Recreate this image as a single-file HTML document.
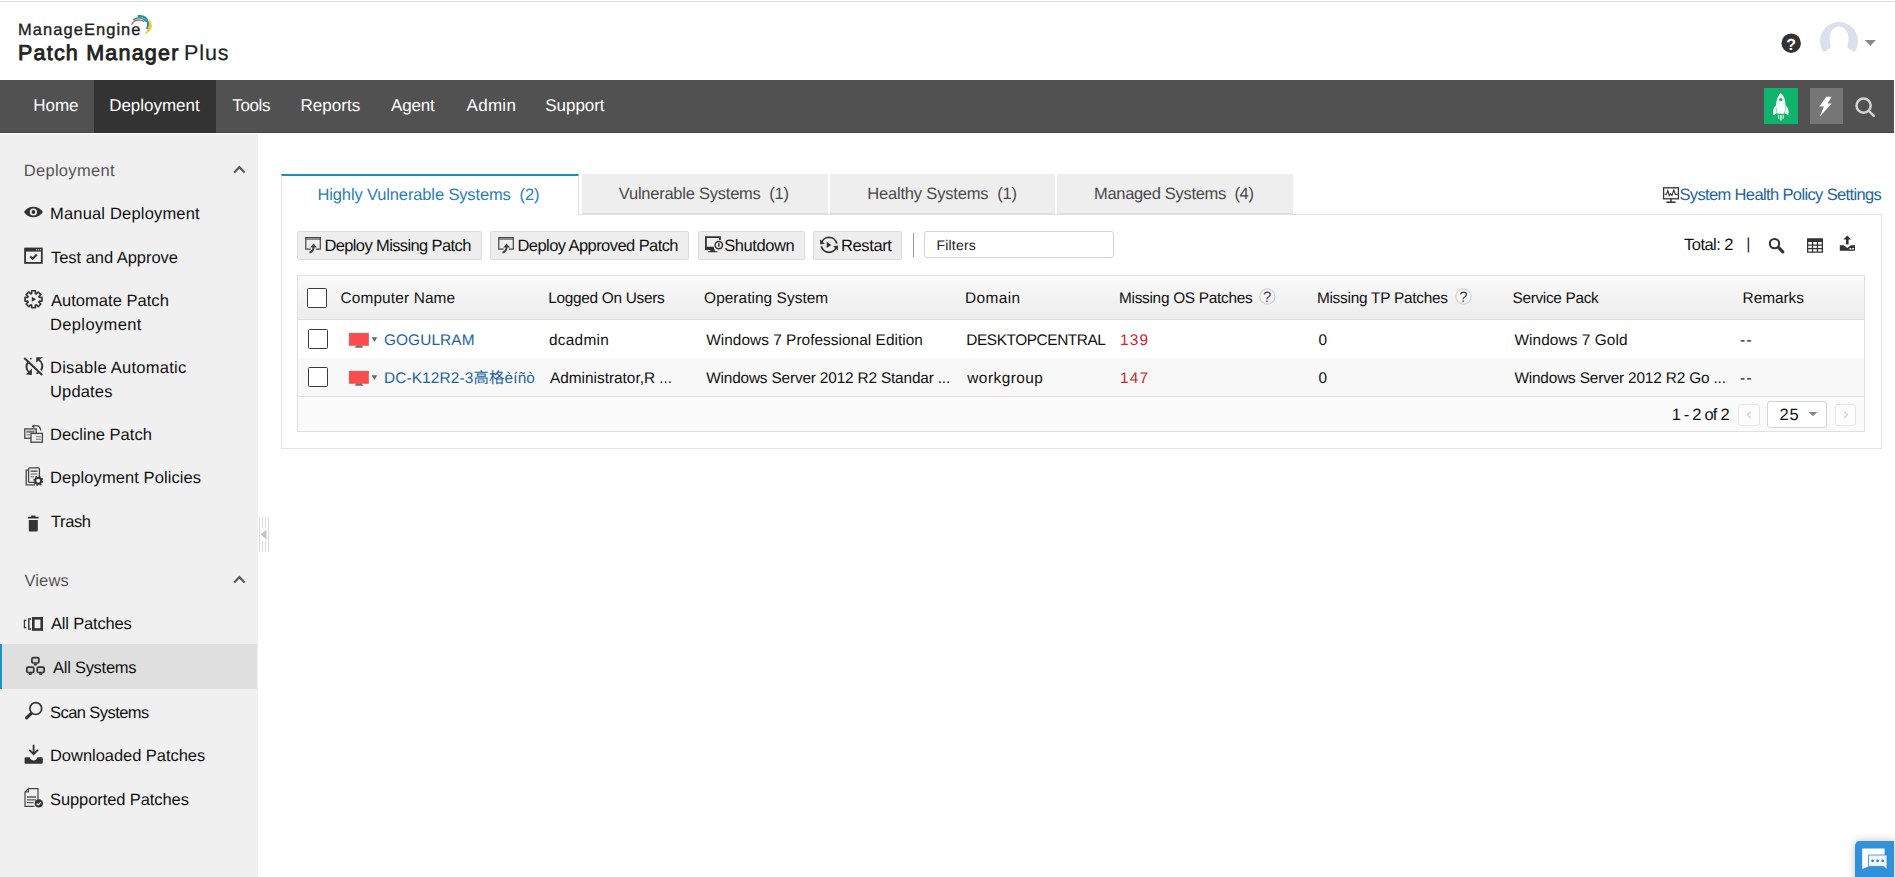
<!DOCTYPE html>
<html lang="en">
<head>
<meta charset="utf-8">
<title>Patch Manager Plus - All Systems</title>
<style>
html,body{margin:0;padding:0;background:#fff;text-rendering:geometricPrecision;}
body{width:1895px;height:877px;position:relative;overflow:hidden;font-family:"Liberation Sans","Noto Sans CJK SC",sans-serif;}
.a{position:absolute;box-sizing:border-box;}
.t{position:absolute;white-space:pre;line-height:1;font-family:"Liberation Sans","Noto Sans CJK SC",sans-serif;}
svg{position:absolute;overflow:visible;}
</style>
</head>
<body>
<!-- top hairline -->
<div class="a" style="left:0;top:1px;width:1895px;height:1px;background:#dcdcdc"></div>
<!-- nav bar -->
<div class="a" style="left:0;top:80px;width:1894px;height:53px;background:linear-gradient(#515151 0,#515151 52px,#474747 52px)"></div>
<div class="a" style="left:94px;top:80px;width:122px;height:53px;background:#333"></div>
<!-- sidebar -->
<div class="a" style="left:0;top:134px;width:258px;height:743px;background:#f0f0f0"></div>
<div class="a" style="left:0;top:644px;width:257px;height:45px;background:#dfdfdf"></div>
<div class="a" style="left:0;top:644px;width:2px;height:45px;background:#1b93c8"></div>
<!-- tabs -->
<div class="a" style="left:281px;top:214px;width:1601px;height:235px;border:1px solid #e2e2e2;background:#fff"></div>
<div class="a" style="left:281px;top:174px;width:298px;height:41px;background:#fff;border-left:1px solid #e2e2e2;border-right:1px solid #e2e2e2;border-top:2px solid #1d8cc0"></div>
<div class="a" style="left:582px;top:174px;width:246px;height:40px;background:#eee;border-bottom:1px solid #ddd"></div>
<div class="a" style="left:830px;top:174px;width:225px;height:40px;background:#eee;border-bottom:1px solid #ddd"></div>
<div class="a" style="left:1057px;top:174px;width:236px;height:40px;background:#eee;border-bottom:1px solid #ddd"></div>
<!-- toolbar buttons -->
<div class="a" style="left:297px;top:231px;width:185px;height:29px;background:#eee;border:1px solid #dcdcdc;border-radius:2px"></div>
<div class="a" style="left:490px;top:231px;width:199px;height:29px;background:#eee;border:1px solid #dcdcdc;border-radius:2px"></div>
<div class="a" style="left:698px;top:231px;width:107px;height:29px;background:#eee;border:1px solid #dcdcdc;border-radius:2px"></div>
<div class="a" style="left:813px;top:231px;width:89px;height:29px;background:#eee;border:1px solid #dcdcdc;border-radius:2px"></div>
<div class="a" style="left:913px;top:233px;width:1px;height:24px;background:#999"></div>
<div class="a" style="left:924px;top:231px;width:190px;height:27px;background:#fff;border:1px solid #d2d2d2;border-radius:3px"></div>
<!-- table -->
<div class="a" style="left:297px;top:275px;width:1568px;height:157px;border:1px solid #e0e0e0;background:#fbfbfb"></div>
<div class="a" style="left:298px;top:276px;width:1566px;height:43px;background:linear-gradient(#fafafa,#ededed)"></div>
<div class="a" style="left:298px;top:319px;width:1566px;height:1px;background:#ddd"></div>
<div class="a" style="left:298px;top:320px;width:1566px;height:38px;background:#fff"></div>
<div class="a" style="left:298px;top:358px;width:1566px;height:38px;background:#f8f8f8"></div>
<div class="a" style="left:298px;top:396px;width:1566px;height:1px;background:#e0e0e0"></div>
<!-- checkboxes -->
<div class="a" style="left:307px;top:288px;width:20px;height:20px;background:#fff;border:1px solid #3a3a3a;border-radius:1.5px"></div>
<div class="a" style="left:308px;top:329px;width:20px;height:20px;background:#fff;border:1px solid #3a3a3a;border-radius:1.5px"></div>
<div class="a" style="left:308px;top:367px;width:20px;height:20px;background:#fff;border:1px solid #3a3a3a;border-radius:1.5px"></div>
<!-- pager -->
<div class="a" style="left:1738px;top:404px;width:22px;height:22px;background:#fdfdfd;border:1px solid #e6e6e6;border-radius:3px"></div>
<div class="a" style="left:1767px;top:401px;width:60px;height:27px;background:#fff;border:1px solid #d4d4d4;border-radius:3px"></div>
<div class="a" style="left:1835px;top:404px;width:21px;height:22px;background:#fdfdfd;border:1px solid #e6e6e6;border-radius:3px"></div>
<!-- top-right nav buttons -->
<div class="a" style="left:1764px;top:88px;width:34px;height:36px;background:#10b36b"></div>
<div class="a" style="left:1810px;top:88px;width:33px;height:36px;background:#767676"></div>
<!-- chat -->
<div class="a" style="left:1855px;top:841px;width:39px;height:40px;background:#3090d9;border-radius:5px 0 0 0;box-shadow:0 0 8px rgba(0,0,0,.25)"></div>
<svg width="1895" height="877" viewBox="0 0 1895 877" style="left:0;top:0">
<!-- logo swoosh -->
<g fill="none" stroke-linecap="round">
<path d="M131.8 24.3 Q134.2 19.6 139.5 19.9 Q142.5 20.1 144 21.6" stroke="#d42f45" stroke-width="1.050"/>
<path d="M133.6 19.6 Q140 15.2 146.2 21.2" stroke="#1ea672" stroke-width="1.650"/>
<path d="M138.5 16 Q146.8 15.4 148 23 Q148.4 26 147.2 28.3" stroke="#2a86c4" stroke-width="2.100"/>
</g>
<path d="M149.4 18.8 Q154.2 26.5 149.6 31.2 Q147.2 33.6 144 34.6 Q149.6 29.5 149.4 18.8Z" fill="#f1c83c"/>
<!-- help -->
<circle cx="1791.2" cy="43.2" r="9.7" fill="#333"/>
<!-- avatar -->
<clipPath id="av"><rect x="1818" y="20" width="42" height="33.5"/></clipPath>
<g clip-path="url(#av)">
<circle cx="1839" cy="41" r="19" fill="#dcdfec"/>
<ellipse cx="1839" cy="38.600" rx="9.600" ry="12.200" fill="#fff"/>
<rect x="1830.600" y="42" width="16.800" height="14" fill="#fff"/>
<path d="M1818 55.800 L1831 47.600 L1847 47.600 L1860 55.800 L1860 62 L1818 62Z" fill="#fff"/>
</g>
<path d="M1864.7 40 L1876 40 L1870.35 45.8Z" fill="#888"/>
<!-- rocket -->
<g fill="#f1fff8">
<path d="M1780.8 92.8 C1777 96.5 1775.6 102 1776.2 108 L1777.4 113.8 L1784.2 113.8 L1785.4 108 C1786 102 1784.6 96.5 1780.8 92.8Z"/>
<path d="M1775.6 105.5 C1773.4 107.5 1772.6 111 1773.2 115.2 L1776.8 113.2Z"/>
<path d="M1786 105.5 C1788.2 107.5 1789 111 1788.4 115.2 L1784.8 113.2Z"/>
<rect x="1778" y="114.8" width="1.2" height="4" opacity=".8"/><rect x="1780.1" y="114.8" width="1.6" height="5.6" opacity=".85"/><rect x="1782.6" y="114.8" width="1.2" height="4" opacity=".8"/>
</g>
<circle cx="1780.8" cy="99.6" r="1.6" fill="#10b36b"/>
<!-- bolt -->
<path d="M1826.2 96.8 L1831.6 96.8 L1827.6 103.6 L1831.8 103.6 L1819.6 116.8 L1824 106.6 L1819.4 106.6Z" fill="#fff"/>
<!-- nav search -->
<g fill="none" stroke="#d2d2d2" stroke-width="2.500"><circle cx="1863.600" cy="105.600" r="7.100"/><path d="M1868.800 110.800 L1873.800 115.800" stroke-linecap="round"/></g>
<!-- sidebar chevrons -->
<g fill="none" stroke="#5a5a5a" stroke-width="2.2"><path d="M234.2 172.6 L239.4 167.2 L244.6 172.6"/><path d="M234.2 582.6 L239.4 577.2 L244.6 582.6"/></g>
<!-- eye -->
<path d="M24 212 C28 205 38.600 205 42.9 212 C38.600 219 28 219 24 212Z" fill="#333"/>
<circle cx="33.400" cy="212" r="3.6" fill="#f3f3f3"/><circle cx="33.400" cy="212" r="1.9" fill="#333"/>
<!-- test & approve -->
<g fill="none" stroke="#333" stroke-width="1.8"><rect x="25.1" y="248.5" width="16.7" height="14.4"/></g>
<rect x="25" y="248" width="17" height="3.6" fill="#333"/>
<path d="M36 249.800 h1.200 M38 249.800 h1.200 M40 249.800 h1.200" stroke="#ddd" stroke-width="1"/>
<path d="M30.2 256.6 L32.6 258.8 L36.8 254.6" fill="none" stroke="#333" stroke-width="2.1"/>
<!-- gear play -->
<g transform="translate(33.5 299.3)">
<g fill="none" stroke="#333" stroke-width="1.6" stroke-linejoin="round"><path d="M1.83 5.82 L1.88 8.49 L-1.88 8.49 L-1.83 5.82 L-2.82 5.41 L-4.67 7.34 L-7.34 4.67 L-5.41 2.82 L-5.82 1.83 L-8.49 1.88 L-8.49 -1.88 L-5.82 -1.83 L-5.41 -2.82 L-7.34 -4.67 L-4.67 -7.34 L-2.82 -5.41 L-1.83 -5.82 L-1.88 -8.49 L1.88 -8.49 L1.83 -5.82 L2.82 -5.41 L4.67 -7.34 L7.34 -4.67 L5.41 -2.82 L5.82 -1.83 L8.49 -1.88 L8.49 1.88 L5.82 1.83 L5.41 2.82 L7.34 4.67 L4.67 7.34 L2.82 5.41Z"/></g>
<path d="M-1.7 -2.500 L2.600 0 L-1.7 2.500Z" fill="#333"/></g>
<!-- sync disabled -->
<g fill="none" stroke="#333" stroke-width="1.900">
<path d="M28.800 361.400 C25.500 364.500 25.600 369.600 29.400 372.800"/><path d="M38.800 360 C42.700 362 43.300 367 41 370.300"/><path d="M24.300 358 L42.200 375" stroke-width="2"/><path d="M36.400 373.400 C37.600 373.200 38.400 372.800 39 372.200" stroke-width="1.600"/>
</g>
<path d="M31.900 368.400 L31.900 375 L25.900 374.400Z" fill="#333"/><path d="M36.200 357.200 L42.800 357.200 L36.200 362.400Z" fill="#333"/><rect x="30.100" y="357.900" width="1.500" height="1.500" fill="#333"/>
<!-- decline patch -->
<g fill="none" stroke="#444" stroke-width="1.3"><rect x="24.800" y="428.900" width="11.400" height="9.400"/><rect x="31" y="433.400" width="11.400" height="8.800" fill="#f0f0f0"/><path d="M33.500 426 C38 424.500 40.500 427 40.800 430.500"/></g>
<rect x="26.400" y="430.600" width="8.200" height="2.200" fill="#777"/><rect x="26.400" y="434" width="4" height="1.600" fill="#999"/><rect x="36" y="436" width="5" height="1.400" fill="#999"/><rect x="36" y="438.600" width="5" height="1.400" fill="#999"/>
<path d="M31.500 426.300 L34.300 424.200 L34.300 428.200Z" fill="#444"/>
<!-- deployment policies -->
<g fill="none" stroke="#444" stroke-width="1.300"><path d="M28.300 470.200 L26.200 470.200 L26.200 484.800 L35 484.800"/><rect x="28.600" y="467.800" width="10.800" height="14.600" rx="1"/></g>
<rect x="30.600" y="470.400" width="6.800" height="1.500" fill="#555"/><rect x="30.600" y="473.400" width="6.800" height="1.200" fill="#777"/><rect x="30.600" y="476.200" width="3.600" height="1.200" fill="#777"/>
<circle cx="38.200" cy="480.800" r="4.600" fill="#f0f0f0"/><circle cx="38.200" cy="480.800" r="3" fill="none" stroke="#333" stroke-width="2"/><circle cx="38.200" cy="480.800" r="4.300" fill="none" stroke="#333" stroke-width="1.500" stroke-dasharray="1.700 1.680"/>
<!-- trash -->
<path d="M28 516.800 L38.600 516.800 L38.600 518.600 L28 518.600Z M31.200 515.600 L35.400 515.600 L35.400 517 L31.200 517Z M28.800 520 L37.800 520 L37.800 530.200 Q37.800 531.400 36.600 531.400 L30 531.400 Q28.800 531.400 28.800 530.200Z" fill="#333"/>
<!-- all patches -->
<g fill="none" stroke="#333"><rect x="33.300" y="618.300" width="8.400" height="11.200" stroke-width="2.600"/><path d="M31.200 619 L28.800 619 L28.800 629 L31.200 629" stroke-width="1.400"/><path d="M26.400 620.300 L24.400 620.300 L24.400 627.700 L26.400 627.700" stroke-width="1.200"/></g>
<!-- all systems -->
<g fill="none" stroke="#333" stroke-width="1.700"><rect x="31.900" y="657.700" width="7" height="5.300" rx="1.300" fill="#d0d0d0"/><rect x="26.800" y="667.200" width="7" height="5.300" rx="1.300" fill="#d0d0d0"/><rect x="37.200" y="667.200" width="7" height="5.300" rx="1.300" fill="#d0d0d0"/></g>
<path d="M33.600 663.800 H37.200 L36.600 665.500 H34.200Z M28.500 673.300 H32.100 L31.500 675 H29.100Z M38.900 673.300 H42.500 L41.900 675 H39.500Z" fill="#333"/>
<!-- scan systems -->
<g fill="none" stroke="#333"><circle cx="35.800" cy="708.600" r="5.900" stroke-width="1.700"/><path d="M31 713.600 L26.600 717.800" stroke-width="3.200" stroke-linecap="round"/></g>
<!-- downloaded patches -->
<path d="M32.700 744.800 L34.500 744.800 L34.500 752 L37.300 749.200 L38.500 750.400 L33.600 755.400 L28.700 750.400 L29.900 749.200 L32.700 752Z" fill="#333"/>
<path d="M24.600 758.400 Q24.600 757.200 25.800 757.200 L29.600 757.200 Q31 760.400 33.600 760.400 Q36.200 760.400 37.600 757.200 L41.600 757.200 Q42.800 757.200 42.800 758.400 L42.800 762.600 Q42.800 763.800 41.600 763.800 L25.800 763.800 Q24.600 763.800 24.600 762.600Z" fill="#333"/>
<!-- supported patches -->
<path d="M28.400 788.600 L38 788.600 L38 800 M34.500 806.400 L25 806.400 L25 792 L28.400 788.600 L28.400 792 L25 792" fill="none" stroke="#444" stroke-width="1.200"/>
<path d="M27 797 L36 797 M27 799.800 L36 799.800 M27 802.600 L33.500 802.600" stroke="#555" stroke-width="1.300"/>
<circle cx="38.800" cy="803.400" r="4.200" fill="#333"/><path d="M36.700 803.500 L38.200 805 L41 802.200" fill="none" stroke="#f0f0f0" stroke-width="1.200"/>
<!-- splitter -->
<g stroke="#cfcfcf" stroke-width="1"><path d="M259.500 517 V552 M262.500 517 V528 M262.500 541 V552 M265.500 517 V528 M265.500 541 V552 M268.500 517 V552" stroke="#d8d8d8"/></g>
<path d="M266.500 529.500 L266.500 539.500 L260.500 534.500Z" fill="#c4c4c4"/>
<!-- sys health icon -->
<g fill="none" stroke="#333" stroke-width="1.300"><rect x="1663.600" y="187.800" width="14.800" height="11"/><path d="M1671 198.600 V202.200 M1666.400 202.300 H1675.600" stroke-width="1.400"/><path d="M1664.500 194.300 L1666.500 194.300 L1667.800 190.500 L1669.300 195.600 L1670.500 193.600 L1672 195.400 L1673.800 190 L1675.300 194.400 L1677.600 194.400" stroke-width="1.100"/></g>
<!-- deploy icons -->
<g fill="none" stroke="#444" stroke-width="1.200"><path d="M310.600 249.200 L305.800 249.200 L305.800 237.700 L320.300 237.700 L320.300 249.200 L315.800 249.200"/><path d="M305.800 239.100 H320.300" stroke-width="1"/><path d="M309.400 252.700 C312.600 251.800 313.700 249.500 313.600 246" stroke-width="1.900"/></g>
<path d="M310.200 247.400 L313.600 243.500 L317 247.400Z" fill="#444"/>
<g transform="translate(193 0)"><g fill="none" stroke="#444" stroke-width="1.200"><path d="M310.600 249.200 L305.800 249.200 L305.800 237.700 L320.300 237.700 L320.300 249.200 L315.800 249.200"/><path d="M305.800 239.100 H320.300" stroke-width="1"/><path d="M309.400 252.700 C312.600 251.800 313.700 249.500 313.600 246" stroke-width="1.900"/></g><path d="M310.200 247.400 L313.600 243.500 L317 247.400Z" fill="#444"/></g>
<!-- shutdown icon -->
<path d="M720 240 L720 237.200 L705.900 237.200 L705.900 248.400" fill="none" stroke="#333" stroke-width="1.800"/>
<path d="M705 246.800 L713.600 246.800 L714.600 250 L705 250Z" fill="#333"/><path d="M710.500 250 L714.500 250 L715.500 251.200 L717.500 251.200 L717.500 252.300 L708 252.300 L708 251.200 L710 251.200Z" fill="#333"/>
<circle cx="718.800" cy="245.100" r="3.700" fill="#eee" stroke="#333" stroke-width="1.500"/><path d="M718.800 243.200 V246.800" stroke="#333" stroke-width="1.500"/>
<!-- restart icon -->
<g fill="none" stroke="#333" stroke-width="1.800"><path d="M821.300 243.600 A7.900 7.900 0 0 1 836.700 243.600"/><path d="M836.700 246.200 A7.900 7.900 0 0 1 821.300 246.200"/></g>
<path d="M819.900 239.600 L820.300 244.400 L824.800 243.400Z" fill="#333"/><path d="M838.100 250.200 L837.700 245.400 L833.200 246.400Z" fill="#333"/>
<path d="M826.700 241.800 L831.300 244.900 L826.700 248Z" fill="#333"/>
<!-- toolbar right icons -->
<g fill="none" stroke="#333"><circle cx="1774.500" cy="243.600" r="4.700" stroke-width="2"/><path d="M1778.700 247.700 L1782.800 251.800" stroke-width="3.100" stroke-linecap="round"/></g>
<path fill="#333" fill-rule="evenodd" d="M1807 238.200 H1823 V252.700 H1807Z M1808.300 241.900 H1811.900 V244.400 H1808.300Z M1813.200 241.900 H1816.800 V244.400 H1813.200Z M1818.100 241.900 H1821.700 V244.400 H1818.100Z M1808.300 245.700 H1811.900 V248.100 H1808.300Z M1813.200 245.700 H1816.800 V248.100 H1813.200Z M1818.100 245.700 H1821.700 V248.100 H1818.100Z M1808.300 249.300 H1811.900 V251.600 H1808.300Z M1813.200 249.300 H1816.800 V251.600 H1813.200Z M1818.100 249.300 H1821.700 V251.600 H1818.100Z"/>
<path fill="#333" d="M1847.300 235.600 L1851.200 239.400 L1848.600 239.400 L1848.600 244.600 L1846 244.600 L1846 239.400 L1843.400 239.400Z"/>
<path fill="#333" fill-rule="evenodd" d="M1839.800 245.200 L1843.800 245.200 L1847.300 247.900 L1850.800 245.200 L1855 245.200 L1855 250.800 L1839.800 250.800Z M1849.500 248 H1851.300 V249.400 H1849.500Z M1852.200 248 H1854 V249.400 H1852.200Z"/>
<!-- row icons -->
<g><rect x="349.100" y="333.100" width="19.600" height="12.500" fill="#f84c4f"/><rect x="349.100" y="333.100" width="19.600" height="12.500" fill="none" stroke="#b8584a" stroke-width=".6" opacity=".6"/><path d="M356.300 345.600 L361.600 345.600 L363.400 347.700 L354.600 347.700Z" fill="#7f6b60"/><path d="M371.700 337.200 L377.200 337.200 L374.450 341.900Z" fill="#666"/></g>
<g transform="translate(0 38)"><g><rect x="349.100" y="333.100" width="19.600" height="12.500" fill="#f84c4f"/><rect x="349.100" y="333.100" width="19.600" height="12.500" fill="none" stroke="#b8584a" stroke-width=".6" opacity=".6"/><path d="M356.300 345.600 L361.600 345.600 L363.400 347.700 L354.600 347.700Z" fill="#7f6b60"/><path d="M371.700 337.200 L377.200 337.200 L374.450 341.900Z" fill="#666"/></g></g>
<!-- help circles in header -->
<circle cx="1267.300" cy="296.500" r="7.600" fill="#f6f6f6" stroke="#d2d2d2" stroke-width="1.300"/>
<circle cx="1463.500" cy="296.500" r="7.600" fill="#f6f6f6" stroke="#d2d2d2" stroke-width="1.300"/>
<!-- pager -->
<g fill="none" stroke="#c8c8c8" stroke-width="1.100"><path d="M1750.600 411.600 L1747.600 414.800 L1750.600 418"/><path d="M1844.400 411.600 L1847.400 414.800 L1844.400 418"/></g>
<path d="M1808.600 412 L1817.400 412 L1813 416.200Z" fill="#888"/>
<!-- chat -->
<g><path d="M1862.200 848.600 H1884.600 V855 H1868.400 V866.400 L1862.200 869Z" fill="#fff"/><path d="M1868.400 855 H1887 V869.400 L1883.600 866.400 H1868.400Z" fill="#eef6ff" stroke="#3d86c8" stroke-width=".8"/><circle cx="1872.600" cy="860.800" r="1.400" fill="#3d7fc0"/><circle cx="1877.600" cy="860.800" r="1.400" fill="#3d7fc0"/><circle cx="1882.600" cy="860.800" r="1.400" fill="#3d7fc0"/></g>
</svg>

<span class="t " style="left:18.0px;top:22.00px;font-size:16.5px;color:#222;letter-spacing:1.045px;-webkit-text-stroke:0.35px #222;">ManageEngine</span>
<span class="t " style="left:18.0px;top:43.00px;font-size:21.5px;color:#222;letter-spacing:1.208px;-webkit-text-stroke:0.85px #222;">Patch Manager</span>
<span class="t " style="left:184.0px;top:43.00px;font-size:21.5px;color:#222;letter-spacing:0.933px;-webkit-text-stroke:0.2px #222;">Plus</span>
<span class="t " style="left:33.3px;top:97.00px;font-size:17px;color:#fff;letter-spacing:-0.033px;">Home</span>
<span class="t " style="left:109.2px;top:97.00px;font-size:17px;color:#fff;letter-spacing:-0.022px;">Deployment</span>
<span class="t " style="left:232.3px;top:97.00px;font-size:17px;color:#fff;letter-spacing:-0.375px;">Tools</span>
<span class="t " style="left:300.5px;top:97.00px;font-size:17px;color:#fff;letter-spacing:0.017px;">Reports</span>
<span class="t " style="left:391.0px;top:97.00px;font-size:17px;color:#fff;letter-spacing:-0.175px;">Agent</span>
<span class="t " style="left:466.5px;top:97.00px;font-size:17px;color:#fff;letter-spacing:0.3px;">Admin</span>
<span class="t " style="left:545.3px;top:97.00px;font-size:17px;color:#fff;letter-spacing:-0.05px;">Support</span>
<span class="t " style="left:23.7px;top:163.00px;font-size:16.5px;color:#555;letter-spacing:0.311px;">Deployment</span>
<span class="t " style="left:50.0px;top:206.00px;font-size:16.5px;color:#111;letter-spacing:0.181px;">Manual Deployment</span>
<span class="t " style="left:51.0px;top:250.00px;font-size:16.5px;color:#111;letter-spacing:-0.04px;">Test and Approve</span>
<span class="t " style="left:51.0px;top:293.00px;font-size:16.5px;color:#111;letter-spacing:0.031px;">Automate Patch</span>
<span class="t " style="left:50.0px;top:317.00px;font-size:16.5px;color:#111;letter-spacing:0.367px;">Deployment</span>
<span class="t " style="left:50.0px;top:360.00px;font-size:16.5px;color:#111;letter-spacing:0.256px;">Disable Automatic</span>
<span class="t " style="left:50.0px;top:384.00px;font-size:16.5px;color:#111;letter-spacing:0.167px;">Updates</span>
<span class="t " style="left:50.0px;top:427.00px;font-size:16.5px;color:#111;letter-spacing:0.0px;">Decline Patch</span>
<span class="t " style="left:50.0px;top:470.00px;font-size:16.5px;color:#111;letter-spacing:0.089px;">Deployment Policies</span>
<span class="t " style="left:51.0px;top:514.00px;font-size:16.5px;color:#111;letter-spacing:-0.4px;">Trash</span>
<span class="t " style="left:24.5px;top:573.00px;font-size:16.5px;color:#555;letter-spacing:0.125px;">Views</span>
<span class="t " style="left:51.0px;top:616.00px;font-size:16.5px;color:#111;letter-spacing:-0.17px;">All Patches</span>
<span class="t " style="left:53.0px;top:660.00px;font-size:16.5px;color:#111;letter-spacing:-0.26px;">All Systems</span>
<span class="t " style="left:50.0px;top:705.00px;font-size:16.5px;color:#111;letter-spacing:-0.564px;">Scan Systems</span>
<span class="t " style="left:50.0px;top:748.00px;font-size:16.5px;color:#111;letter-spacing:-0.041px;">Downloaded Patches</span>
<span class="t " style="left:50.0px;top:792.00px;font-size:16.5px;color:#111;letter-spacing:-0.088px;">Supported Patches</span>
<span class="t " style="left:317.5px;top:187.00px;font-size:16.5px;color:#2b80b3;letter-spacing:-0.134px;">Highly Vulnerable Systems  (2)</span>
<span class="t " style="left:618.8px;top:186.00px;font-size:16.5px;color:#4a4a4a;letter-spacing:-0.241px;">Vulnerable Systems  (1)</span>
<span class="t " style="left:867.2px;top:186.00px;font-size:16.5px;color:#4a4a4a;letter-spacing:-0.174px;">Healthy Systems  (1)</span>
<span class="t " style="left:1094.0px;top:186.00px;font-size:16.5px;color:#4a4a4a;letter-spacing:-0.316px;">Managed Systems  (4)</span>
<span class="t " style="left:1679.4px;top:187.00px;font-size:16.5px;color:#24649c;letter-spacing:-0.629px;">System Health Policy Settings</span>
<span class="t " style="left:324.4px;top:238.00px;font-size:16.5px;color:#111;letter-spacing:-0.616px;">Deploy Missing Patch</span>
<span class="t " style="left:517.5px;top:238.00px;font-size:16.5px;color:#111;letter-spacing:-0.57px;">Deploy Approved Patch</span>
<span class="t " style="left:724.3px;top:238.00px;font-size:16.5px;color:#111;letter-spacing:-0.443px;">Shutdown</span>
<span class="t " style="left:841.0px;top:238.00px;font-size:16.5px;color:#111;letter-spacing:-0.383px;">Restart</span>
<span class="t " style="left:936.5px;top:238.00px;font-size:14px;color:#222;letter-spacing:0.2px;">Filters</span>
<span class="t " style="left:1684.1px;top:237.00px;font-size:16.5px;color:#111;letter-spacing:-0.543px;">Total: 2</span>
<span class="t " style="left:340.5px;top:291.00px;font-size:15.4px;color:#111;letter-spacing:0.142px;">Computer Name</span>
<span class="t " style="left:548.3px;top:291.00px;font-size:15.4px;color:#111;letter-spacing:-0.3px;">Logged On Users</span>
<span class="t " style="left:704.1px;top:291.00px;font-size:15.4px;color:#111;letter-spacing:0.06px;">Operating System</span>
<span class="t " style="left:965.0px;top:291.00px;font-size:15.4px;color:#111;letter-spacing:0.42px;">Domain</span>
<span class="t " style="left:1119.0px;top:291.00px;font-size:15.4px;color:#111;letter-spacing:-0.288px;">Missing OS Patches</span>
<span class="t " style="left:1316.9px;top:291.00px;font-size:15.4px;color:#111;letter-spacing:-0.253px;">Missing TP Patches</span>
<span class="t " style="left:1512.5px;top:291.00px;font-size:15.4px;color:#111;letter-spacing:-0.327px;">Service Pack</span>
<span class="t " style="left:1742.6px;top:291.00px;font-size:15.4px;color:#111;letter-spacing:-0.05px;">Remarks</span>
<span class="t " style="left:383.9px;top:333.00px;font-size:15.4px;color:#24649c;letter-spacing:0.129px;">GOGULRAM</span>
<span class="t " style="left:549.0px;top:333.00px;font-size:15.4px;color:#111;letter-spacing:0.267px;">dcadmin</span>
<span class="t " style="left:706.2px;top:333.00px;font-size:15.4px;color:#111;letter-spacing:0.038px;">Windows 7 Professional Edition</span>
<span class="t " style="left:966.3px;top:333.00px;font-size:15.4px;color:#111;letter-spacing:-0.423px;">DESKTOPCENTRAL</span>
<span class="t " style="left:1120.1px;top:333.00px;font-size:15.4px;color:#d2232a;letter-spacing:1.1px;">139</span>
<span class="t " style="left:1318.6px;top:333.00px;font-size:15.4px;color:#111;letter-spacing:0.8px;">0</span>
<span class="t " style="left:1514.4px;top:333.00px;font-size:15.4px;color:#111;letter-spacing:0.085px;">Windows 7 Gold</span>
<span class="t " style="left:1740.1px;top:333.00px;font-size:15.4px;color:#111;letter-spacing:1.4px;">--</span>
<span class="t " style="left:383.9px;top:371.00px;font-size:15.4px;color:#24649c;letter-spacing:0.147px;">DC-K12R2-3高格èíñò</span>
<span class="t " style="left:550.0px;top:371.00px;font-size:15.4px;color:#111;letter-spacing:-0.011px;">Administrator,R ...</span>
<span class="t " style="left:706.2px;top:371.00px;font-size:15.4px;color:#111;letter-spacing:-0.176px;">Windows Server 2012 R2 Standar ...</span>
<span class="t " style="left:967.3px;top:371.00px;font-size:15.4px;color:#111;letter-spacing:0.463px;">workgroup</span>
<span class="t " style="left:1120.1px;top:371.00px;font-size:15.4px;color:#d2232a;letter-spacing:1.1px;">147</span>
<span class="t " style="left:1318.6px;top:371.00px;font-size:15.4px;color:#111;letter-spacing:0.8px;">0</span>
<span class="t " style="left:1514.4px;top:371.00px;font-size:15.4px;color:#111;letter-spacing:-0.175px;">Windows Server 2012 R2 Go ...</span>
<span class="t " style="left:1740.1px;top:371.00px;font-size:15.4px;color:#111;letter-spacing:1.4px;">--</span>
<span class="t " style="left:1671.7px;top:407.00px;font-size:16.5px;color:#111;letter-spacing:-0.8px;">1 - 2 of 2</span>
<span class="t " style="left:1779.4px;top:407.00px;font-size:16.5px;color:#111;letter-spacing:0.9px;">25</span>
<span class="t " style="left:1263.0px;top:290.00px;font-size:15px;color:#444;letter-spacing:-0.4px;">?</span>
<span class="t " style="left:1459.2px;top:290.00px;font-size:15px;color:#444;letter-spacing:-0.4px;">?</span>
<span class="t " style="left:1786.2px;top:38.00px;font-size:16px;color:#fff;letter-spacing:0.0px;font-weight:700;">?</span>
<span class="t " style="left:1746.2px;top:237.00px;font-size:16px;color:#222;letter-spacing:-0.4px;">|</span>
</body>
</html>
